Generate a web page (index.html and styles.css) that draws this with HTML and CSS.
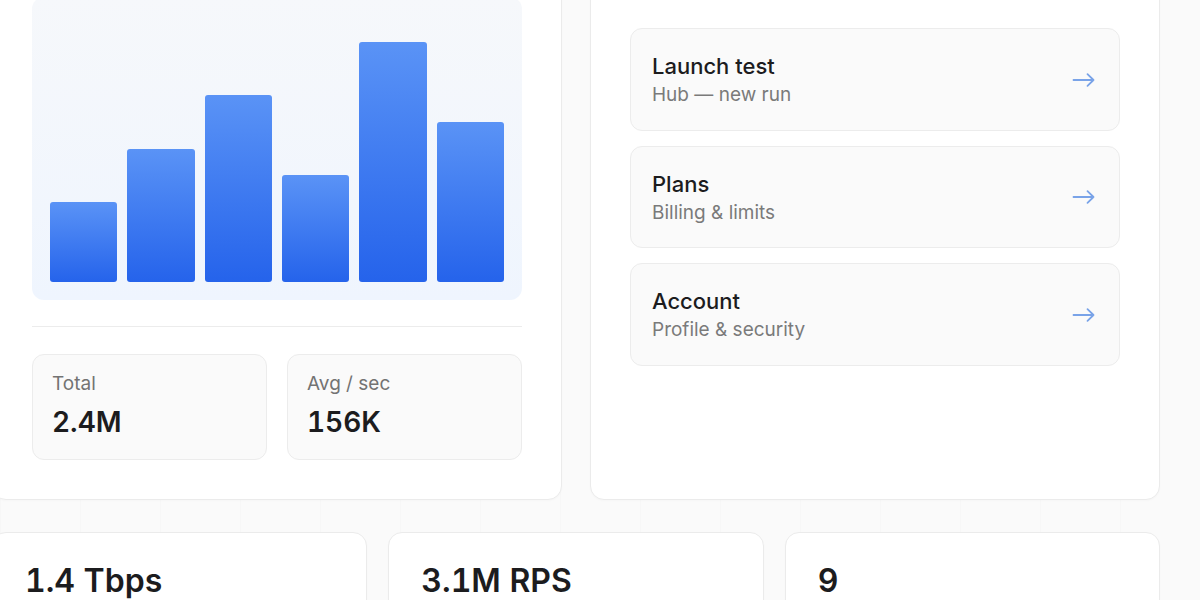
FILE: index.html
```html
<!DOCTYPE html>
<html lang="en">
<head>
<meta charset="utf-8">
<title>Dashboard</title>
<link rel="stylesheet" href="styles.css">
</head>
<body>
<main class="page">
  <section class="top-row">
    <article class="card chart-card">
      <div class="chart-panel">
        <div class="bars">
          <div class="bar" style="height:30%"></div>
          <div class="bar" style="height:50%"></div>
          <div class="bar" style="height:70%"></div>
          <div class="bar" style="height:40%"></div>
          <div class="bar" style="height:90%"></div>
          <div class="bar" style="height:60%"></div>
        </div>
      </div>
      <hr class="divider">
      <div class="stats">
        <div class="stat-box">
          <div class="stat-label">Total</div>
          <div class="stat-value">2.4M</div>
        </div>
        <div class="stat-box">
          <div class="stat-label">Avg / sec</div>
          <div class="stat-value">156K</div>
        </div>
      </div>
    </article>

    <article class="card links-card">
      <ul class="links">
        <li class="link-item">
          <div class="link-text">
            <div class="link-title">Launch test</div>
            <div class="link-sub">Hub — new run</div>
          </div>
          <svg class="arrow" width="24" height="16" viewBox="0 0 24 16" fill="none" stroke="currentColor" stroke-width="1.8" stroke-linecap="round" stroke-linejoin="round"><path d="M1.5 8h20M15.5 2.2L21.5 8 15.5 13.8"/></svg>
        </li>
        <li class="link-item">
          <div class="link-text">
            <div class="link-title">Plans</div>
            <div class="link-sub">Billing &amp; limits</div>
          </div>
          <svg class="arrow" width="24" height="16" viewBox="0 0 24 16" fill="none" stroke="currentColor" stroke-width="1.8" stroke-linecap="round" stroke-linejoin="round"><path d="M1.5 8h20M15.5 2.2L21.5 8 15.5 13.8"/></svg>
        </li>
        <li class="link-item">
          <div class="link-text">
            <div class="link-title">Account</div>
            <div class="link-sub">Profile &amp; security</div>
          </div>
          <svg class="arrow" width="24" height="16" viewBox="0 0 24 16" fill="none" stroke="currentColor" stroke-width="1.8" stroke-linecap="round" stroke-linejoin="round"><path d="M1.5 8h20M15.5 2.2L21.5 8 15.5 13.8"/></svg>
        </li>
      </ul>
    </article>
  </section>

  <section class="bottom-row">
    <article class="card metric-card"><div class="metric-value">1.4 Tbps</div></article>
    <article class="card metric-card"><div class="metric-value">3.1M RPS</div></article>
    <article class="card metric-card"><div class="metric-value">9</div></article>
  </section>
</main>
</body>
</html>
```

FILE: styles.css
```css
* { box-sizing: border-box; }

html, body {
  margin: 0;
  padding: 0;
}

body {
  font-family: "Inter", "Noto Sans", "Liberation Sans", sans-serif;
  color: #1c1c1e;
  background-color: #fafafa;
  background-image:
    linear-gradient(to right, rgba(0,0,0,0.012) 1px, transparent 1px);
  background-size: 80px 80px;
  overflow: hidden;
}

.page {
  width: 1168px;
  margin: -43px 0 0 -8px;
}

.top-row {
  display: grid;
  grid-template-columns: 570px 570px;
  gap: 28px;
}

.card {
  background: #fff;
  border: 1px solid #ebebeb;
  border-radius: 14px;
  box-shadow: 0 1px 2px rgba(0,0,0,0.02);
}

.chart-card,
.links-card {
  padding: 39px;
}

.chart-panel {
  border-radius: 12px;
  background: linear-gradient(to bottom, #f6f8fb, #eff5fe);
  padding: 18px;
}

.bars {
  height: 267px;
  display: flex;
  align-items: flex-end;
  gap: 10px;
}

.bar {
  flex: 1;
  border-radius: 3px;
  background: linear-gradient(to bottom, #5a93f6, #2563eb);
}

.divider {
  border: 0;
  border-top: 1px solid #ececec;
  margin: 26px 0 27px;
}

.stats {
  display: grid;
  grid-template-columns: 1fr 1fr;
  gap: 20px;
}

.stat-box {
  background: #fafafa;
  border: 1px solid #ececec;
  border-radius: 12px;
  padding: 17px 19px 20px;
  height: 106px;
}

.stat-label {
  font-size: 19px;
  line-height: 24px;
  color: #737373;
}

.stat-value {
  margin-top: 9px;
  font-size: 28px;
  line-height: 34px;
  font-weight: 600;
  font-variant-numeric: tabular-nums;
  color: #1c1c1e;
}

.links {
  list-style: none;
  margin: 31px 0 0;
  padding: 0;
  display: flex;
  flex-direction: column;
  gap: 15px;
}

.link-item {
  display: flex;
  align-items: center;
  justify-content: space-between;
  background: #fafafa;
  border: 1px solid #ececec;
  border-radius: 12px;
  padding: 23px 23px 22.5px 21px;
}

.link-title {
  font-size: 22px;
  line-height: 28px;
  font-weight: 500;
  color: #1c1c1e;
}

.link-sub {
  margin-top: 3px;
  font-size: 19px;
  line-height: 24px;
  color: #7a7a7a;
}

.arrow {
  color: #79a3e8;
  display: block;
}

.bottom-row {
  margin-top: 32px;
  display: grid;
  grid-template-columns: repeat(3, 1fr);
  gap: 21px;
}

.metric-card {
  padding: 29px 32px;
  height: 140px;
}

.metric-value {
  font-size: 32px;
  line-height: 38px;
  font-weight: 600;
  font-variant-numeric: tabular-nums;
  color: #1c1c1e;
}
```
